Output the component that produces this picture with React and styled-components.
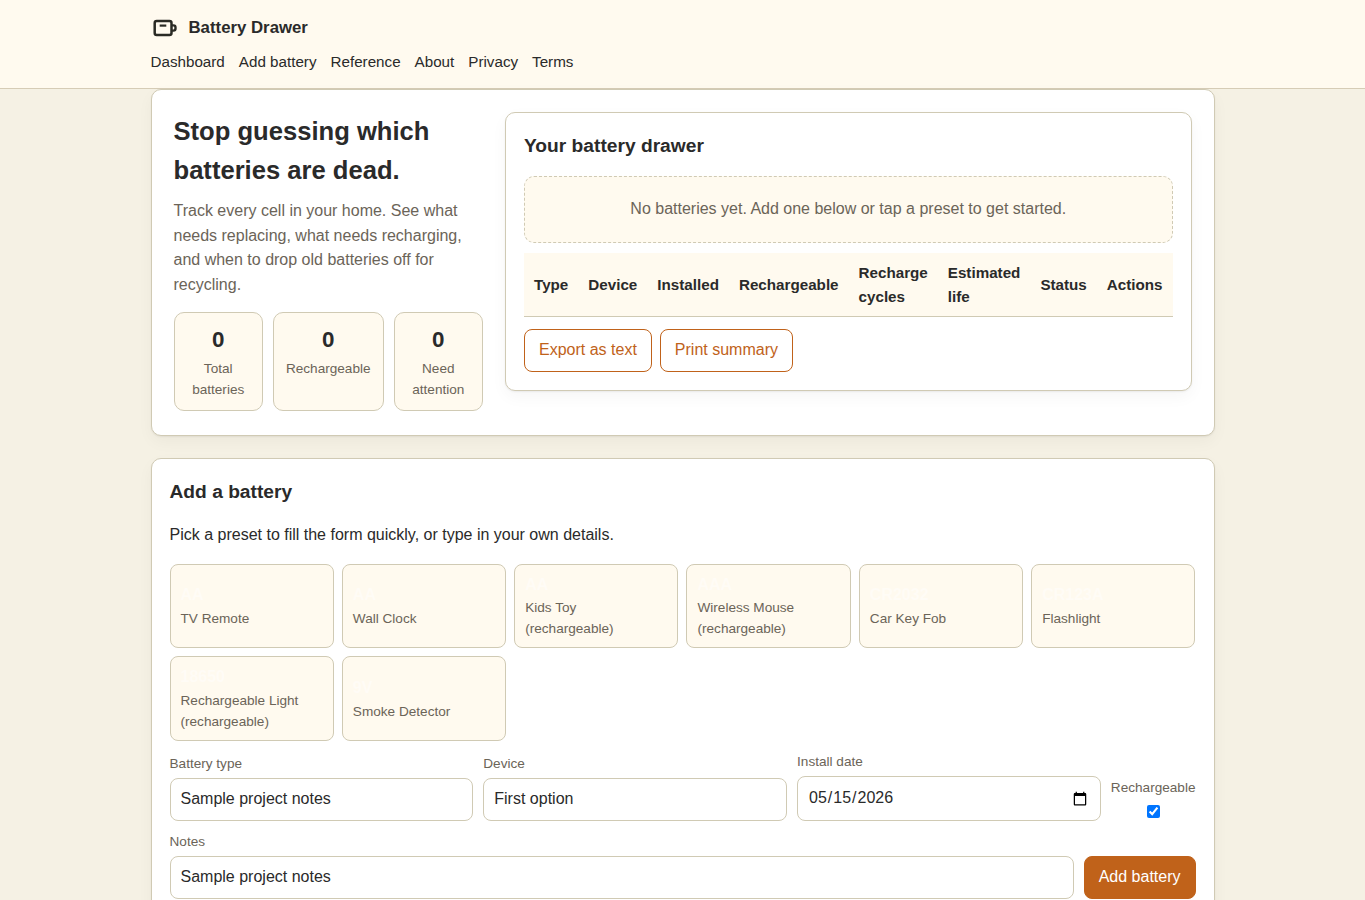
import styled, { createGlobalStyle } from "styled-components";
import { useState } from "react";

const GlobalStyle = createGlobalStyle`
  * {
    box-sizing: border-box;
  }

  body {
    margin: 0;
    background: #f5f1e4;
    color: #2a2a2a;
    font-family: "Liberation Sans", Arial, sans-serif;
    font-size: 16px;
    line-height: 1.55;
  }
`;

const Header = styled.header`
  background: #fffaef;
  border-bottom: 1px solid #d6ccb6;
`;

const HeaderInner = styled.div`
  display: flex;
  flex-direction: column;
  gap: 8px;
  max-width: 1100px;
  margin: 0 auto;
  padding: 14px 18px;
`;

const Brand = styled.a`
  display: flex;
  align-items: center;
  gap: 10px;
  height: 28px;
  font-size: 16.8px;
  font-weight: 700;
`;

const Nav = styled.nav`
  display: flex;
  gap: 14px;
  font-size: 15.2px;
`;

const Main = styled.main`
  max-width: 1100px;
  margin: 0 auto;
  padding: 0 18px;
`;

const Card = styled.section`
  padding: ${(props) => props.$pad || 18}px;
  margin-bottom: ${(props) => props.$gap || 0}px;
  background: #fff;
  border: 1px solid #d0cab4;
  border-radius: 10px;
  box-shadow: 0 1px 2px rgba(0, 0, 0, 0.06), 0 6px 16px rgba(0, 0, 0, 0.04);
`;

const Hero = styled.div`
  display: grid;
  grid-template-columns: 309.5px 1fr;
  gap: 22px;
  align-items: start;
`;

const HeroTitle = styled.h1`
  margin: 0 0 8px;
  font-size: 25.6px;
`;

const Lead = styled.p`
  margin: 0 0 14px;
  color: #6b6458;
`;

const Stats = styled.div`
  display: grid;
  grid-template-columns: repeat(3, 1fr);
  gap: 10px;
  margin-bottom: 2.1px;
`;

const Stat = styled.div`
  padding: 10px 12px;
  background: #fffaef;
  border: 1px solid #d0cab4;
  border-radius: 10px;
  text-align: center;
`;

const StatNumber = styled.div`
  font-size: 22.4px;
  font-weight: 700;
`;

const StatLabel = styled.div`
  color: #6b6458;
  font-size: 13.6px;
`;

const CardTitle = styled.h2`
  margin: 0 0 16px;
  font-size: 19.2px;
`;

const Empty = styled.div`
  padding: 20px;
  margin-bottom: 10px;
  background: #fffaef;
  border: 1px dashed #d0cab4;
  border-radius: 10px;
  color: #6b6458;
  text-align: center;
`;

const Table = styled.table`
  width: 100%;
  border-collapse: collapse;
  font-size: 15.2px;

  th {
    padding: 8px 10px;
    background: #fffaef;
    border-bottom: 1px solid #d0cab4;
    text-align: left;
  }
`;

const Actions = styled.div`
  display: flex;
  gap: 8px;
  margin-top: 12px;
`;

const Button = styled.button`
  padding: 8px 14px;
  font: inherit;
  color: ${(props) => (props.$outline ? "#c0621a" : "#fff")};
  background: ${(props) => (props.$outline ? "#fff" : "#c0621a")};
  border: 1px solid #c0621a;
  border-radius: 8px;
  cursor: pointer;
`;

const Intro = styled.p`
  margin: 16px 0;
`;

const Presets = styled.div`
  display: grid;
  grid-template-columns: repeat(6, 1fr);
  gap: 8px;
  margin-bottom: 10px;
`;

const Preset = styled.button`
  padding: 8px 10px;
  font: inherit;
  color: #fffcf6;
  text-align: left;
  background: #fffaef;
  border: 1px solid #d0cab4;
  border-radius: 8px;
  cursor: pointer;
`;

const PresetType = styled.strong`
  display: block;
`;

const PresetName = styled.span`
  display: block;
  color: #6b6458;
  font-size: 13.6px;
`;

const FormRow = styled.div`
  display: grid;
  grid-template-columns: ${(props) => props.$columns};
  gap: 10px;
  align-items: end;
  margin-bottom: 10px;
`;

const Field = styled.label`
  display: flex;
  flex-direction: column;
  align-items: ${(props) => (props.$center ? "center" : "stretch")};
  gap: 4px;
  color: #6b6458;
  font-size: 13.6px;
`;

const Input = styled.input`
  width: 100%;
  padding: 8px 10px;
  font: inherit;
  font-size: 16px;
  color: #2a2a2a;
  background: #fff;
  border: 1px solid #d0cab4;
  border-radius: 8px;
`;

const Checkbox = styled.input`
  margin: 3px 3px 3px 4.5px;
`;

const links = ["Dashboard", "Add battery", "Reference", "About", "Privacy", "Terms"];

const stats = [
  { label: "Total batteries", value: 0 },
  { label: "Rechargeable", value: 0 },
  { label: "Need attention", value: 0 },
];

const columns = [
  "Type",
  "Device",
  "Installed",
  "Rechargeable",
  "Recharge cycles",
  "Estimated life",
  "Status",
  "Actions",
];

const presets = [
  { type: "AA", name: "TV Remote" },
  { type: "AA", name: "Wall Clock" },
  { type: "AA", name: "Kids Toy (rechargeable)" },
  { type: "AAA", name: "Wireless Mouse (rechargeable)" },
  { type: "CR2032", name: "Car Key Fob" },
  { type: "CR123A", name: "Flashlight" },
  { type: "18650", name: "Rechargeable Light (rechargeable)" },
  { type: "9V", name: "Smoke Detector" },
];

function BatteryIcon() {
  return (
    <svg width="28" height="28" viewBox="0 0 28 28" fill="none" stroke="#2a2a24">
      <rect x="3.7" y="7" width="16.8" height="14" rx="2" strokeWidth="2.5" />
      <path d="M20.5 11.4h2a2 2 0 0 1 2 2v1.2a2 2 0 0 1-2 2h-2" strokeWidth="2.4" />
      <path d="M8.7 11.6h6.6" strokeWidth="2.2" />
    </svg>
  );
}

export default function App() {
  const [type, setType] = useState("Sample project notes");
  const [device, setDevice] = useState("First option");
  const [date, setDate] = useState("2026-05-15");
  const [rechargeable, setRechargeable] = useState(true);
  const [notes, setNotes] = useState("Sample project notes");

  return (
    <>
      <GlobalStyle />
      <Header>
        <HeaderInner>
          <Brand>
            <BatteryIcon />
            Battery Drawer
          </Brand>
          <Nav>
            {links.map((link) => (
              <a key={link}>{link}</a>
            ))}
          </Nav>
        </HeaderInner>
      </Header>

      <Main>
        <Card $pad={22} $gap={22}>
          <Hero>
            <div>
              <HeroTitle>Stop guessing which batteries are dead.</HeroTitle>
              <Lead>
                Track every cell in your home. See what needs replacing, what
                needs recharging, and when to drop old batteries off for
                recycling.
              </Lead>
              <Stats>
                {stats.map((stat) => (
                  <Stat key={stat.label}>
                    <StatNumber>{stat.value}</StatNumber>
                    <StatLabel>{stat.label}</StatLabel>
                  </Stat>
                ))}
              </Stats>
            </div>

            <Card>
              <CardTitle>Your battery drawer</CardTitle>
              <Empty>
                No batteries yet. Add one below or tap a preset to get started.
              </Empty>
              <Table>
                <thead>
                  <tr>
                    {columns.map((column) => (
                      <th key={column}>{column}</th>
                    ))}
                  </tr>
                </thead>
              </Table>
              <Actions>
                <Button $outline>Export as text</Button>
                <Button $outline>Print summary</Button>
              </Actions>
            </Card>
          </Hero>
        </Card>

        <Card>
          <CardTitle>Add a battery</CardTitle>
          <Intro>
            Pick a preset to fill the form quickly, or type in your own details.
          </Intro>
          <Presets>
            {presets.map((preset) => (
              <Preset key={preset.name}>
                <PresetType>{preset.type}</PresetType>
                <PresetName>{preset.name}</PresetName>
              </Preset>
            ))}
          </Presets>

          <FormRow $columns="1fr 1fr 1fr auto">
            <Field>
              Battery type
              <Input value={type} onChange={(e) => setType(e.target.value)} />
            </Field>
            <Field>
              Device
              <Input value={device} onChange={(e) => setDevice(e.target.value)} />
            </Field>
            <Field>
              Install date
              <Input
                type="date"
                value={date}
                onChange={(e) => setDate(e.target.value)}
              />
            </Field>
            <Field $center>
              Rechargeable
              <Checkbox
                type="checkbox"
                checked={rechargeable}
                onChange={(e) => setRechargeable(e.target.checked)}
              />
            </Field>
          </FormRow>
          <FormRow $columns="1fr auto">
            <Field>
              Notes
              <Input value={notes} onChange={(e) => setNotes(e.target.value)} />
            </Field>
            <Button>Add battery</Button>
          </FormRow>
        </Card>
      </Main>
    </>
  );
}
